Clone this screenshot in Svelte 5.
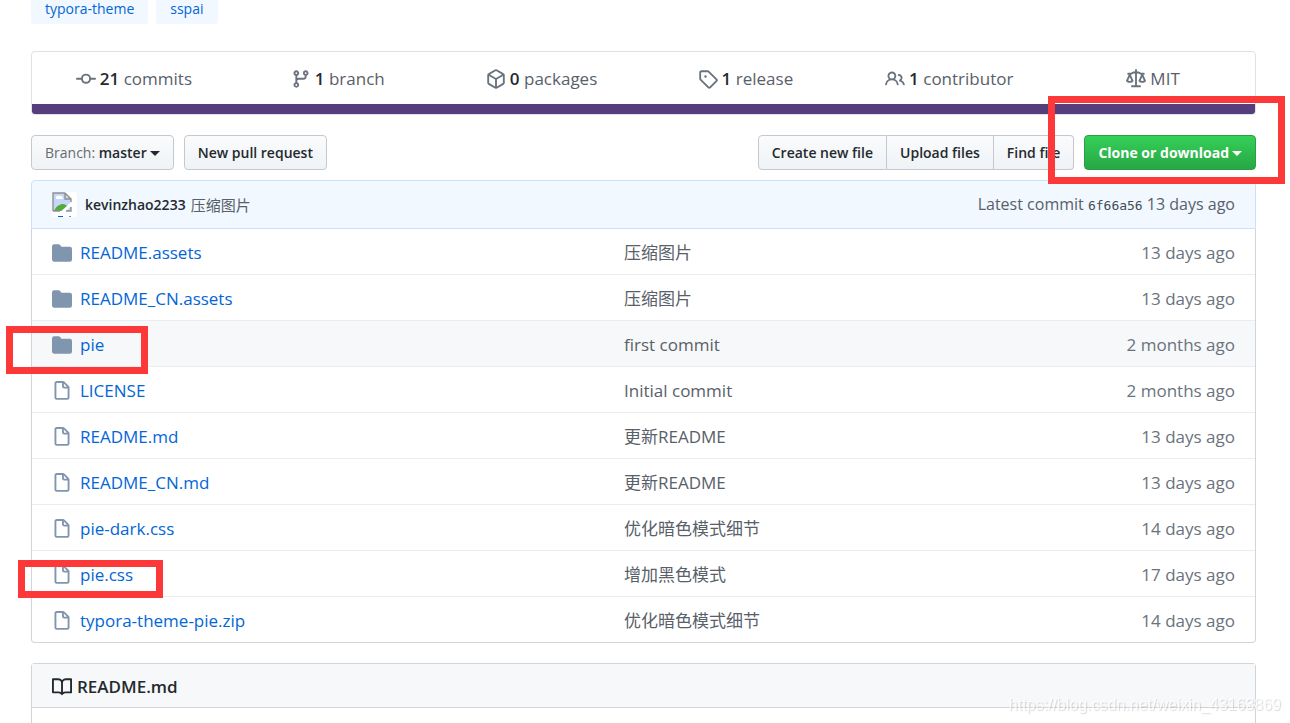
<script lang="ts">
  const icons: Record<string, string> = {
    commit:
      "M10.5 7.75a2.5 2.5 0 11-5 0 2.5 2.5 0 015 0zm1.43.75a4.002 4.002 0 01-7.86 0H.75a.75.75 0 110-1.5h3.32a4.001 4.001 0 017.86 0h3.32a.75.75 0 110 1.5h-3.32z",
    branch:
      "M11.75 2.5a.75.75 0 100 1.5.75.75 0 000-1.5zm-2.25.75a2.25 2.25 0 113 2.122V6A2.5 2.5 0 0110 8.5H6a1 1 0 00-1 1v1.128a2.251 2.251 0 11-1.5 0V5.372a2.25 2.25 0 111.5 0v1.836A2.492 2.492 0 016 7h4a1 1 0 001-1v-.628A2.25 2.25 0 019.5 3.25zM4.25 12a.75.75 0 100 1.5.75.75 0 000-1.5zM3.5 3.25a.75.75 0 111.5 0 .75.75 0 01-1.5 0z",
    package:
      "M8.878.392a1.75 1.75 0 00-1.756 0l-5.25 3.045A1.75 1.75 0 001 4.951v6.098c0 .624.332 1.2.872 1.514l5.25 3.045a1.75 1.75 0 001.756 0l5.25-3.045c.54-.313.872-.89.872-1.514V4.951c0-.624-.332-1.2-.872-1.514L8.878.392zM7.875 1.69a.25.25 0 01.25 0l4.63 2.685L8 7.133 3.245 4.375l4.63-2.685zM2.5 5.677v5.372c0 .09.047.171.125.216l4.625 2.683V8.432L2.5 5.677zm6.25 8.271l4.625-2.683a.25.25 0 00.125-.216V5.677L8.75 8.432v5.516z",
    tag: "M2.5 7.775V2.75a.25.25 0 01.25-.25h5.025a.25.25 0 01.177.073l6.25 6.25a.25.25 0 010 .354l-5.025 5.025a.25.25 0 01-.354 0l-6.25-6.25a.25.25 0 01-.073-.177zm-1.5 0V2.75C1 1.784 1.784 1 2.75 1h5.025c.464 0 .91.184 1.238.513l6.25 6.25a1.75 1.75 0 010 2.474l-5.026 5.026a1.75 1.75 0 01-2.474 0l-6.25-6.25A1.75 1.75 0 011 7.775zM6 5a1 1 0 100 2 1 1 0 000-2z",
    people:
      "M5.5 3.5a2 2 0 100 4 2 2 0 000-4zM2 5.5a3.5 3.5 0 115.898 2.549 5.507 5.507 0 013.034 4.084.75.75 0 11-1.482.235 4.001 4.001 0 00-7.9 0 .75.75 0 01-1.482-.236A5.507 5.507 0 013.102 8.05 3.49 3.49 0 012 5.5zM11 4a.75.75 0 100 1.5 1.5 1.5 0 01.666 2.844.75.75 0 00-.416.672v.352a.75.75 0 00.574.73c1.2.289 2.162 1.2 2.522 2.372a.75.75 0 101.434-.44 5.01 5.01 0 00-2.56-3.012A3 3 0 0011 4z",
    law: "M8.75.75a.75.75 0 00-1.5 0V2h-.984c-.305 0-.604.08-.869.23l-1.288.737A.25.25 0 013.984 3H1.75a.75.75 0 000 1.5h.428L.066 9.192a.75.75 0 00.154.838l.53-.53-.53.53v.001l.002.002.002.002.006.006.016.015.045.04a3.514 3.514 0 00.686.45A4.492 4.492 0 003 11c.88 0 1.556-.22 2.023-.454a3.515 3.515 0 00.686-.45l.045-.04.016-.015.006-.006.002-.002.001-.002L5.25 9.5l.53.53a.75.75 0 00.154-.838L3.822 4.5h.162c.305 0 .604-.08.869-.23l1.289-.737a.25.25 0 01.124-.033h.984V13h-2.5a.75.75 0 000 1.5h6.5a.75.75 0 000-1.5h-2.5V3.5h.984a.25.25 0 01.124.033l1.29.736c.264.152.563.231.868.231h.162l-2.112 4.692a.75.75 0 00.154.838l.53-.53-.53.53v.001l.002.002.002.002.006.006.016.015.045.04a3.517 3.517 0 00.686.45A4.492 4.492 0 0013 11c.88 0 1.556-.22 2.023-.454a3.512 3.512 0 00.686-.45l.045-.04.01-.01.006-.005.006-.006.002-.002.001-.002-.529-.531.53.53a.75.75 0 00.154-.838L13.823 4.5h.427a.75.75 0 000-1.5h-2.234a.25.25 0 01-.124-.033l-1.29-.736A1.75 1.75 0 009.735 2H8.75V.75zM1.695 9.227c.285.135.718.273 1.305.273s1.02-.138 1.305-.273L3 6.327l-1.305 2.9zm10 0c.285.135.718.273 1.305.273s1.02-.138 1.305-.273L13 6.327l-1.305 2.9z",
    folder:
      "M1.75 1A1.75 1.75 0 000 2.75v10.5C0 14.216.784 15 1.75 15h12.5A1.75 1.75 0 0016 13.25v-8.5A1.75 1.75 0 0014.25 3h-6.5a.25.25 0 01-.2-.1l-.9-1.2c-.33-.44-.85-.7-1.4-.7h-3.5z",
    file: "M3.75 1.5a.25.25 0 00-.25.25v11.5c0 .138.112.25.25.25h8.5a.25.25 0 00.25-.25V6H9.75A1.75 1.75 0 018 4.25V1.5H3.75zm5.75.56v2.19c0 .138.112.25.25.25h2.19L9.5 2.06zM2 1.75C2 .784 2.784 0 3.75 0h5.086c.464 0 .909.184 1.237.513l3.414 3.414c.329.328.513.773.513 1.237v8.086A1.75 1.75 0 0112.25 15h-8.5A1.75 1.75 0 012 13.25V1.75z",
    book: "M0 1.75A.75.75 0 01.75 1h4.253c1.227 0 2.317.59 3 1.501A3.744 3.744 0 0111.006 1h4.245a.75.75 0 01.75.75v10.5a.75.75 0 01-.75.75h-4.507a2.25 2.25 0 00-1.591.659l-.622.621a.75.75 0 01-1.06 0l-.622-.621A2.25 2.25 0 005.258 13H.75a.75.75 0 01-.75-.75V1.75zm8.755 3a2.25 2.25 0 012.25-2.25H14.5v9h-3.757c-.71 0-1.4.201-1.992.572l.004-7.322zm-1.504 7.324l.004-5.073-.002-2.253A2.25 2.25 0 005.003 2.5H1.5v9h3.757a3.75 3.75 0 011.994.574z",
  };

  const topics = ["typora-theme", "sspai"];

  const stats = [
    { icon: "commit", count: "21", label: "commits" },
    { icon: "branch", count: "1", label: "branch" },
    { icon: "package", count: "0", label: "packages" },
    { icon: "tag", count: "1", label: "release" },
    { icon: "people", count: "1", label: "contributor" },
    { icon: "law", count: "", label: "MIT" },
  ];

  const files = [
    { icon: "folder", name: "README.assets", message: "压缩图片", age: "13 days ago" },
    { icon: "folder", name: "README_CN.assets", message: "压缩图片", age: "13 days ago" },
    { icon: "folder", name: "pie", message: "first commit", age: "2 months ago", mark: "pie", active: true },
    { icon: "file", name: "LICENSE", message: "Initial commit", age: "2 months ago" },
    { icon: "file", name: "README.md", message: "更新README", age: "13 days ago" },
    { icon: "file", name: "README_CN.md", message: "更新README", age: "13 days ago" },
    { icon: "file", name: "pie-dark.css", message: "优化暗色模式细节", age: "14 days ago" },
    { icon: "file", name: "pie.css", message: "增加黑色模式", age: "17 days ago", mark: "css" },
    { icon: "file", name: "typora-theme-pie.zip", message: "优化暗色模式细节", age: "14 days ago" },
  ];
</script>

{#snippet icon(name: string)}
  <svg class="icon icon-{name}" viewBox="0 0 16 16" width="20" height="20" aria-hidden="true">
    <path fill-rule="evenodd" d={icons[name]} />
  </svg>
{/snippet}

<main class="repo">
  <div class="topics">
    {#each topics as topic}
      <a class="topic" href="#{topic}">{topic}</a>
    {/each}
  </div>

  <section class="summary">
    <ul class="stats">
      {#each stats as stat}
        <li>
          <a href="#{stat.icon}">
            {@render icon(stat.icon)}
            <span>{#if stat.count}<strong>{stat.count}</strong>{" "}{/if}{stat.label}</span>
          </a>
        </li>
      {/each}
    </ul>
    <div class="language-bar"></div>
  </section>

  <div class="toolbar">
    <button class="btn" type="button">
      <span><span class="muted">Branch:</span> master</span><i class="caret"></i>
    </button>
    <button class="btn" type="button">New pull request</button>
    <div class="btn-group">
      <button class="btn" type="button">Create new file</button>
      <button class="btn" type="button">Upload files</button>
      <button class="btn" type="button">Find file</button>
    </div>
    <div class="clone">
      <button class="btn btn-primary" type="button">
        <span>Clone or download</span><i class="caret"></i>
      </button>
      <span class="mark mark-clone"></span>
    </div>
  </div>

  <div class="latest">
    <svg class="avatar" viewBox="0 0 25 25" width="25" height="25" role="img" aria-label="@kevinzhao2233">
      <rect width="25" height="25" rx="3" fill="#fff" />
      <path d="M1 1h12l6 6v12H1z" fill="#c6d8f8" />
      <path d="M4 6a2 2 0 0 1 3-2 3 3 0 0 1 4 3H4z" fill="#fff" />
      <path d="M2 19c2-5 6-7 9-7 2 0 3 1 4 2l-6 5z" fill="#55ab38" />
      <path d="M9 20 20 9v4l-7 7z" fill="#fff" />
      <path d="M1 19V1h12M13 1v6h6v3M1 19h7M14 19h5v-4M13 1l6 6" fill="none" stroke="#8f8f8f" stroke-width="1.4" />
      <path d="M6 24.5h5" stroke="#0366d6" />
      <path d="M17 24.5h2" stroke="#6b8fd8" />
    </svg>
    <a class="author" href="#author">kevinzhao2233</a>
    <a class="message" href="#commit">压缩图片</a>
    <span class="when">Latest commit <a href="#6f66a56">6f66a56</a> 13 days ago</span>
  </div>

  <table class="files">
    <tbody>
      {#each files as file}
        <tr class:active={file.active}>
          <td class="name">
            <div>
              {@render icon(file.icon)}
              <a href="#{file.name}">{file.name}</a>
            </div>
            {#if file.mark}<span class="mark mark-{file.mark}"></span>{/if}
          </td>
          <td class="message">{file.message}</td>
          <td class="age">{file.age}</td>
        </tr>
      {/each}
    </tbody>
  </table>

  <section class="readme">
    <h3>{@render icon("book")}README.md</h3>
    <div class="readme-body"></div>
  </section>
</main>

<span class="watermark">https://blog.csdn.net/weixin_43163869</span>

<style>
  :global(body) {
    background: #fff;
    color: #24292e;
    font-family: "Open Sans", "Noto Sans CJK SC", sans-serif;
    font-size: 17px;
    line-height: 26px;
  }

  :global(html) {
    overflow: hidden;
  }

  .repo {
    padding: 0 34px 0 31px;
  }

  a {
    color: #0366d6;
    text-decoration: none;
  }

  .icon {
    flex: none;
    fill: currentColor;
  }

  .topics {
    display: flex;
    gap: 8px;
    height: 24px;
    align-items: flex-end;
  }

  .topic {
    padding: 0 14px;
    border-radius: 3px;
    background: #f1f8ff;
    font-size: 14px;
    line-height: 30px;
  }

  .summary {
    margin-top: 27px;
    border: 1px solid #dfe2e5;
    border-radius: 4px;
    overflow: hidden;
  }

  .stats {
    display: grid;
    grid-template-columns: repeat(6, 1fr);
    margin: 0;
    padding: 0;
    list-style: none;
  }

  .stats a {
    display: flex;
    align-items: center;
    justify-content: center;
    gap: 4px;
    height: 50px;
    padding-top: 2px;
    color: #586069;
  }

  .stats .icon {
    color: #6a737d;
  }

  .stats strong {
    color: #24292e;
    font-weight: 600;
  }

  .language-bar {
    height: 10px;
    background: #563d7c;
  }

  .toolbar {
    display: flex;
    gap: 10px;
    margin: 20px 0 10px;
  }

  .btn {
    display: flex;
    align-items: center;
    gap: 3px;
    height: 35px;
    padding: 0 13px;
    border: 1px solid #c5c9cd;
    border-radius: 4px;
    background: linear-gradient(#fafbfc, #eff3f6);
    color: #24292e;
    font: 600 14px/24px "Open Sans", sans-serif;
    white-space: nowrap;
  }

  .muted {
    color: #666b70;
    font-weight: 400;
  }

  .caret {
    margin-top: 2px;
    border: 5px solid transparent;
    border-top-color: currentColor;
    border-bottom: 0;
  }

  .btn-group {
    display: flex;
    margin-left: auto;
  }

  .btn-group .btn + .btn {
    border-left: 0;
  }

  .btn-group .btn:not(:last-child) {
    border-top-right-radius: 0;
    border-bottom-right-radius: 0;
  }

  .btn-group .btn:not(:first-child) {
    border-top-left-radius: 0;
    border-bottom-left-radius: 0;
  }

  .btn-primary {
    border-color: #28a03f;
    background: linear-gradient(#34d058, #28a745);
    color: #fff;
    font-weight: 700;
  }

  .clone {
    position: relative;
  }

  .mark {
    position: absolute;
    z-index: 1;
    box-sizing: border-box;
    border: 7px solid #fc3838;
    pointer-events: none;
  }

  .mark-clone {
    inset: -39px -29px -14px -36px;
  }

  .mark-pie {
    top: 5px;
    left: -26px;
    width: 142px;
    height: 48px;
  }

  .mark-css {
    top: 9px;
    left: -14px;
    width: 145px;
    height: 38px;
  }

  .latest {
    display: flex;
    align-items: center;
    height: 47px;
    padding: 0 20px;
    border: 1px solid #c8e1ff;
    border-radius: 4px 4px 0 0;
    background: #f1f8ff;
    font-size: 15px;
  }

  .author {
    margin: 0 5px 0 8px;
    color: #24292e;
    font-size: 14px;
    font-weight: 600;
  }

  .latest .message {
    color: #586069;
  }

  .when {
    margin-left: auto;
    color: #586069;
    font-size: 16px;
  }

  .when a {
    color: #444d56;
    font-family: "DejaVu Sans Mono", monospace;
    font-size: 13px;
  }

  .files {
    width: 100%;
    border: 1px solid #d1d5da;
    border-top: 0;
    border-radius: 0 0 4px 4px;
    border-spacing: 0;
    table-layout: fixed;
  }

  .files td {
    height: 43px;
    padding: 2px 0 0;
    border-top: 1px solid #eaecef;
    color: #586069;
  }

  .files tr:first-child td {
    border-top: 0;
  }

  .files .active td {
    background: #f6f8fa;
  }

  .files .name {
    position: relative;
    width: 48%;
  }

  .name div {
    display: flex;
    align-items: center;
    gap: 8px;
    padding-left: 20px;
  }

  .name .icon {
    color: #8095ae;
  }

  .files .message {
    padding-left: 5px;
  }

  .files .age {
    padding-right: 20px;
    color: #6a737d;
    text-align: right;
  }

  .readme {
    margin-top: 20px;
    border: 1px solid #d1d5da;
    border-radius: 4px 4px 0 0;
    border-bottom: 0;
  }

  .readme h3 {
    display: flex;
    align-items: center;
    gap: 5px;
    height: 41px;
    margin: 0;
    padding: 2px 20px 0;
    border-bottom: 1px solid #d1d5da;
    background: #f6f8fa;
    font-size: 17px;
    font-weight: 600;
  }

  .readme-body {
    height: 40px;
  }

  .watermark {
    position: fixed;
    right: 9px;
    bottom: 5px;
    color: rgba(255, 255, 255, 0.8);
    font: 16px/26px "Liberation Sans", sans-serif;
    text-shadow: 1px 1px 1px rgba(0, 0, 0, 0.15);
  }
</style>
